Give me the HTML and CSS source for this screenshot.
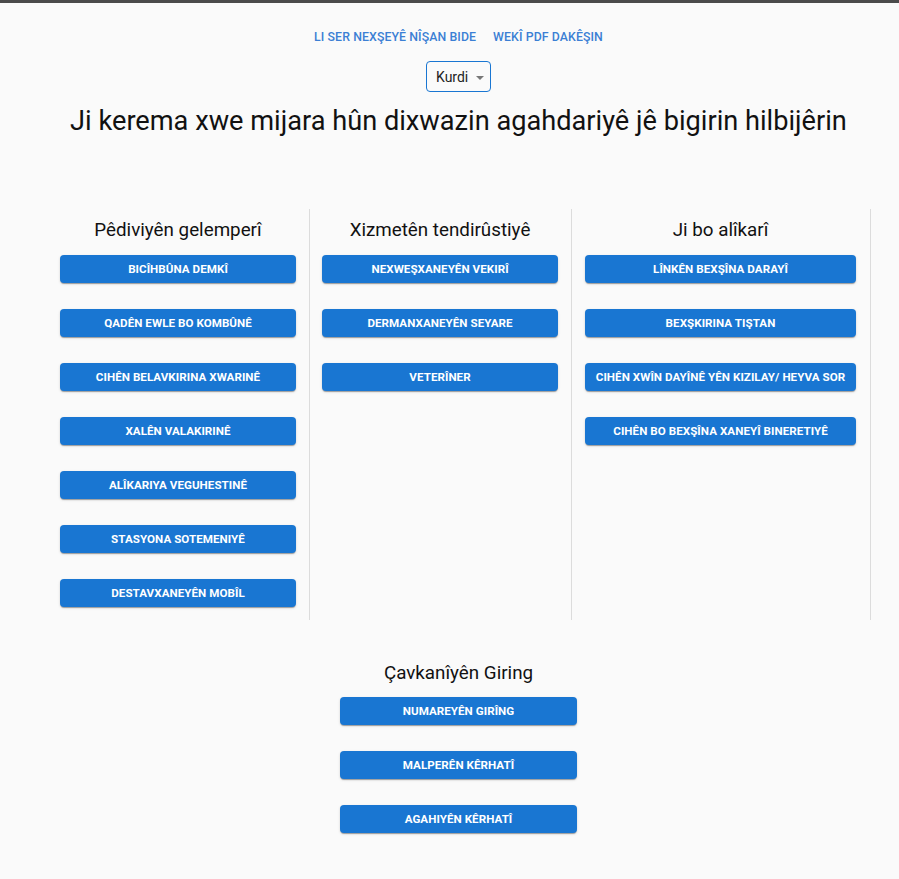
FILE: index.html
```html
<!DOCTYPE html>
<html lang="ku">
<head>
<meta charset="utf-8">
<title>Çavkanî</title>
<link rel="stylesheet" href="styles.css">
</head>
<body>
<div class="topbar"></div>
<div class="page">
  <nav class="links">
    <a href="#">LI SER NEXŞEYÊ NÎŞAN BIDE</a>
    <a href="#">WEKÎ PDF DAKÊŞIN</a>
  </nav>
  <div class="lang-row">
    <div class="lang">Kurdi <span class="caret"></span></div>
  </div>
  <h1 class="title">Ji kerema xwe mijara hûn dixwazin agahdariyê jê bigirin hilbijêrin</h1>

  <div class="columns">
    <section class="col col-a">
      <h2>Pêdiviyên gelemperî</h2>
      <a class="btn" href="#">BICÎHBÛNA DEMKÎ</a>
      <a class="btn" href="#">QADÊN EWLE BO KOMBÛNÊ</a>
      <a class="btn" href="#">CIHÊN BELAVKIRINA XWARINÊ</a>
      <a class="btn" href="#">XALÊN VALAKIRINÊ</a>
      <a class="btn" href="#">ALÎKARIYA VEGUHESTINÊ</a>
      <a class="btn" href="#">STASYONA SOTEMENIYÊ</a>
      <a class="btn" href="#">DESTAVXANEYÊN MOBÎL</a>
    </section>
    <section class="col col-b">
      <h2>Xizmetên tendirûstiyê</h2>
      <a class="btn" href="#">NEXWEŞXANEYÊN VEKIRÎ</a>
      <a class="btn" href="#">DERMANXANEYÊN SEYARE</a>
      <a class="btn" href="#">VETERÎNER</a>
    </section>
    <section class="col col-c">
      <h2>Ji bo alîkarî</h2>
      <a class="btn" href="#">LÎNKÊN BEXŞÎNA DARAYÎ</a>
      <a class="btn" href="#">BEXŞKIRINA TIŞTAN</a>
      <a class="btn" href="#">CIHÊN XWÎN DAYÎNÊ YÊN KIZILAY/ HEYVA SOR</a>
      <a class="btn" href="#">CIHÊN BO BEXŞÎNA XANEYÎ BINERETIYÊ</a>
    </section>
  </div>

  <section class="resources">
    <h2>Çavkanîyên Giring</h2>
    <a class="btn" href="#">NUMAREYÊN GIRÎNG</a>
    <a class="btn" href="#">MALPERÊN KÊRHATÎ</a>
    <a class="btn" href="#">AGAHIYÊN KÊRHATÎ</a>
  </section>
</div>
</body>
</html>
```

FILE: styles.css
```css
html, body {
  margin: 0;
  padding: 0;
}
body {
  background: #fafafa;
  font-family: Roboto, "Liberation Sans", Arial, sans-serif;
  color: #111;
  height: 879px;
  overflow: hidden;
}
.topbar {
  height: 3px;
  background: #4b4b4b;
}
.page {
  padding-left: 18px;
}
.links {
  display: flex;
  justify-content: center;
  gap: 17px;
  padding-top: 27px;
}
.links a {
  color: #3b7fd4;
  text-decoration: none;
  font-size: 12.3px;
  font-weight: 500;
  line-height: 15px;
  letter-spacing: 0.1px;
}
.lang-row {
  display: flex;
  justify-content: center;
  margin-top: 16px;
}
.lang {
  box-sizing: border-box;
  width: 65px;
  height: 31px;
  border: 1px solid #1976d2;
  border-radius: 4px;
  display: flex;
  align-items: center;
  padding-left: 9px;
  font-size: 14px;
  color: #222;
}
.caret {
  width: 0;
  height: 0;
  border-left: 4.5px solid transparent;
  border-right: 4.5px solid transparent;
  border-top: 4.5px solid #777;
  margin-left: 8px;
  margin-top: 2px;
}
.title {
  margin: 12px 0 0;
  text-align: center;
  font-weight: 400;
  font-size: 27.2px;
  line-height: 34px;
  color: #111;
}
.columns {
  display: flex;
  margin-top: 71px;
  margin-left: 29px;
}
.col {
  box-sizing: border-box;
  height: 411px;
  border-right: 1px solid #dcdcdc;
  display: flex;
  flex-direction: column;
  align-items: stretch;
}
.col-a { width: 263px; padding: 0 13px 0 13px; }
.col-b { width: 262px; padding: 0 13px 0 12px; }
.col-c { width: 299px; padding: 0 14px 0 13px; }
.col h2, .resources h2 {
  margin: 8px 0 0;
  text-align: center;
  font-weight: 400;
  font-size: 18.8px;
  line-height: 26px;
  color: #111;
}
.btn {
  display: flex;
  align-items: center;
  justify-content: center;
  height: 28px;
  margin-top: 26px;
  background: #1976d2;
  color: #fff;
  text-decoration: none;
  font-size: 11.6px;
  font-weight: 700;
  letter-spacing: 0.05px;
  border-radius: 4px;
  box-shadow: 0 2px 1px -1px rgba(0,0,0,0.2), 0 1px 1px 0 rgba(0,0,0,0.14), 0 1px 3px 0 rgba(0,0,0,0.12);
}
.col h2 + .btn {
  margin-top: 12px;
}
.resources h2 + .btn {
  margin-top: 11px;
}
.resources {
  width: 237px;
  margin: 40px auto 0;
  display: flex;
  flex-direction: column;
}
.resources h2 {
  margin-top: 0;
  white-space: nowrap;
}
```
